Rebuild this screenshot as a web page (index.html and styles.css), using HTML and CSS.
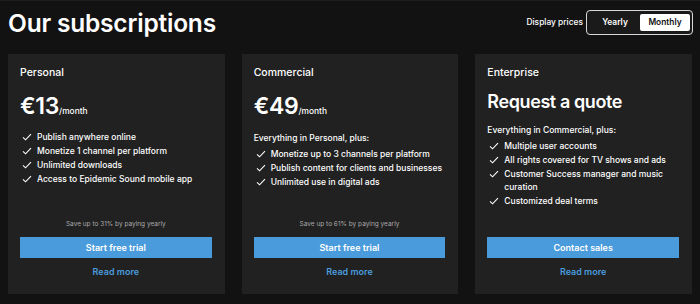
FILE: index.html
```html
<!DOCTYPE html>
<html lang="en">

<head>
    <meta charset="UTF-8">
    <meta name="viewport" content="width=device-width, initial-scale=1.0">
    <title>Our subscriptions</title>
    <link rel="stylesheet" href="styles.css">
</head>

<body>
    <header class="top">
        <h1>Our subscriptions</h1>
        <div class="display">
            <span class="display-label">Display prices</span>
            <div class="toggle">
                <button class="toggle-btn">Yearly</button>
                <button class="toggle-btn active">Monthly</button>
            </div>
        </div>
    </header>

    <div class="plans">
        <div class="plan">
            <div class="plan-name">Personal</div>
            <div class="price">€13<span class="per">/month</span></div>
            <ul class="features">
                <li><svg viewBox="0 0 12 10"><polyline points="1,5.5 4.2,8.5 11,1.5" /></svg>Publish anywhere online</li>
                <li><svg viewBox="0 0 12 10"><polyline points="1,5.5 4.2,8.5 11,1.5" /></svg>Monetize 1 channel per platform</li>
                <li><svg viewBox="0 0 12 10"><polyline points="1,5.5 4.2,8.5 11,1.5" /></svg>Unlimited downloads</li>
                <li><svg viewBox="0 0 12 10"><polyline points="1,5.5 4.2,8.5 11,1.5" /></svg>Access to Epidemic Sound mobile app</li>
            </ul>
            <div class="plan-foot">
                <p class="save">Save up to 31% by paying yearly</p>
                <button class="cta">Start free trial</button>
                <a href="#" class="more">Read more</a>
            </div>
        </div>

        <div class="plan">
            <div class="plan-name">Commercial</div>
            <div class="price">€49<span class="per">/month</span></div>
            <p class="includes">Everything in Personal, plus:</p>
            <ul class="features">
                <li><svg viewBox="0 0 12 10"><polyline points="1,5.5 4.2,8.5 11,1.5" /></svg>Monetize up to 3 channels per platform</li>
                <li><svg viewBox="0 0 12 10"><polyline points="1,5.5 4.2,8.5 11,1.5" /></svg>Publish content for clients and businesses</li>
                <li><svg viewBox="0 0 12 10"><polyline points="1,5.5 4.2,8.5 11,1.5" /></svg>Unlimited use in digital ads</li>
            </ul>
            <div class="plan-foot">
                <p class="save">Save up to 61% by paying yearly</p>
                <button class="cta">Start free trial</button>
                <a href="#" class="more">Read more</a>
            </div>
        </div>

        <div class="plan">
            <div class="plan-name">Enterprise</div>
            <div class="quote">Request a quote</div>
            <p class="includes">Everything in Commercial, plus:</p>
            <ul class="features">
                <li><svg viewBox="0 0 12 10"><polyline points="1,5.5 4.2,8.5 11,1.5" /></svg>Multiple user accounts</li>
                <li><svg viewBox="0 0 12 10"><polyline points="1,5.5 4.2,8.5 11,1.5" /></svg>All rights covered for TV shows and ads</li>
                <li><svg viewBox="0 0 12 10"><polyline points="1,5.5 4.2,8.5 11,1.5" /></svg>Customer Success manager and music curation</li>
                <li><svg viewBox="0 0 12 10"><polyline points="1,5.5 4.2,8.5 11,1.5" /></svg>Customized deal terms</li>
            </ul>
            <div class="plan-foot">
                <button class="cta">Contact sales</button>
                <a href="#" class="more">Read more</a>
            </div>
        </div>
    </div>
</body>

</html>
```

FILE: styles.css
```css
html,
body {
    margin: 0;
    padding: 0;
    height: 100%;
}

body {
    background-color: #121212;
    color: #fff;
    font-family: Inter, "Noto Sans", sans-serif;
    padding: 0 8px;
    box-sizing: border-box;
    border-top: 1px solid #1e1e1e;
}

.top {
    display: flex;
    justify-content: space-between;
    align-items: center;
    height: 53px;
}

.top h1 {
    margin: 0;
    font-size: 24.5px;
    font-weight: 600;
    letter-spacing: -0.2px;
    margin-top: -9px;
}

.display {
    display: flex;
    align-items: center;
    gap: 3px;
    margin-top: -11px;
    margin-right: -1px;
}

.display-label {
    font-size: 8.4px;
    font-weight: 500;
}

.toggle {
    display: flex;
    border: 1px solid #d8d8d8;
    border-radius: 4px;
    padding: 3px 2px 3px 3px;
    background-color: #1a1a1a;
}

.toggle-btn {
    width: 50px;
    height: 17px;
    border: none;
    border-radius: 2px;
    background: none;
    color: #fff;
    font-family: inherit;
    font-size: 8.4px;
    font-weight: 600;
    padding: 0;
    cursor: pointer;
}

.toggle-btn.active {
    background-color: #fff;
    color: #111;
}

.plans {
    display: grid;
    grid-template-columns: repeat(3, 1fr);
    gap: 17px;
    height: 240px;
}

.plan {
    background-color: #212121;
    padding: 11px 13px 16px 12px;
    display: flex;
    flex-direction: column;
}

.plan-name {
    font-size: 10.5px;
    font-weight: 500;
    line-height: 16px;
}

.price {
    font-size: 23px;
    font-weight: 600;
    margin-top: 12px;
    line-height: 27px;
    letter-spacing: -0.3px;
}

.price .per {
    font-size: 8.4px;
    font-weight: 500;
    letter-spacing: 0;
}

.quote {
    font-size: 18px;
    font-weight: 600;
    margin-top: 9px;
    line-height: 24px;
    letter-spacing: -0.4px;
}

.includes {
    margin: 7px 0 0;
    font-size: 8.5px;
    font-weight: 500;
    line-height: 13px;
}

.quote + .includes {
    margin-top: 10px;
}

.features {
    list-style: none;
    margin: 6px 0 0;
    padding: 0;
}

.includes + .features {
    margin-top: 3px;
}

.features li {
    display: flex;
    align-items: flex-start;
    font-size: 8.5px;
    font-weight: 500;
    line-height: 12.5px;
    margin-bottom: 1.6px;
    padding-left: 2px;
}

.features svg {
    width: 10px;
    height: 8px;
    flex-shrink: 0;
    margin: 2px 5px 0 0;
    fill: none;
    stroke: #fff;
    stroke-width: 1.4;
}

.plan-foot {
    margin-top: auto;
    display: flex;
    flex-direction: column;
    align-items: center;
}

.save {
    margin: 0 0 9px;
    font-size: 6.5px;
    color: #aaa;
}

.cta {
    width: 100%;
    height: 21px;
    border: none;
    background-color: #4a9bdc;
    color: #fff;
    font-family: inherit;
    font-size: 9px;
    font-weight: 600;
    cursor: pointer;
}

.more {
    margin-top: 8px;
    color: #4a9bdc;
    font-size: 9px;
    font-weight: 600;
    text-decoration: none;
    line-height: 12px;
}
```
